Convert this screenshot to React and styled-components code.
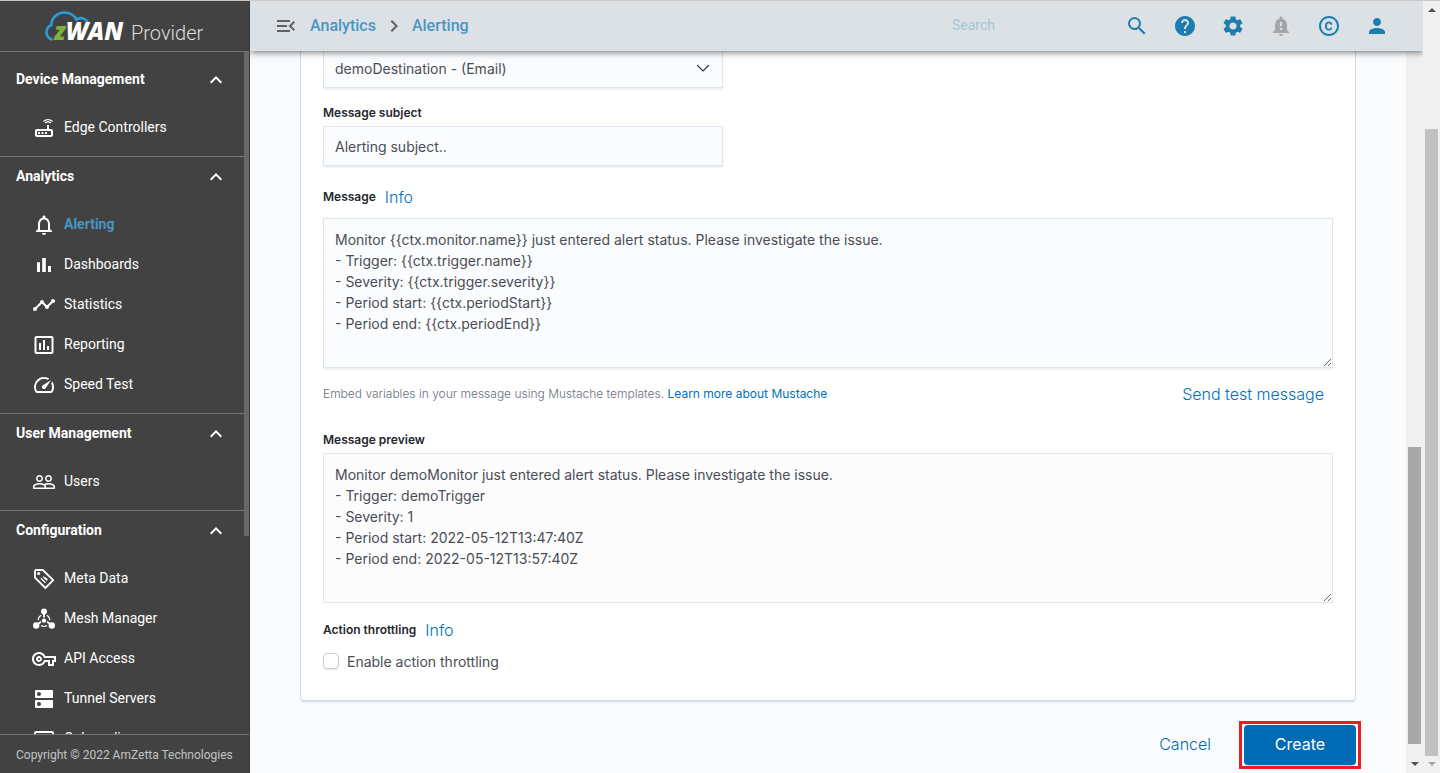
import React from "react";
import styled, { createGlobalStyle, css } from "styled-components";
import {
  MdCopyright,
  MdDns,
  MdHelp,
  MdInsertChartOutlined,
  MdKeyboardArrowRight,
  MdKeyboardArrowUp,
  MdMenuOpen,
  MdNotificationImportant,
  MdNotificationsNone,
  MdOutlineComputer,
  MdOutlineRouter,
  MdOutlineVpnKey,
  MdPeopleOutline,
  MdPerson,
  MdSearch,
  MdSettings,
  MdSpeed,
  MdTimeline,
} from "react-icons/md";

const GlobalStyle = createGlobalStyle`
  *, *::before, *::after { box-sizing: border-box; }
  body { margin: 0; background: #fafbfd; }
  button, input, select, textarea { font: inherit; }
`;

const roboto = `Roboto, "Liberation Sans", sans-serif`;
const inter = `Inter, "Liberation Sans", sans-serif`;

const Shell = styled.div`
  display: grid;
  grid-template-columns: 250px minmax(0, 1fr) 17px;
  height: 100vh;
  overflow: hidden;
  border-top: 1px solid #c8c8c8;
`;

/* ---------- Sidebar ---------- */

const Sidebar = styled.aside`
  display: flex;
  flex-direction: column;
  min-height: 0;
  background: #424242;
  border-right: 1px solid #383838;
  color: #fff;
  font-family: ${roboto};
`;

const Brand = styled.div`
  display: flex;
  flex: none;
  align-items: flex-end;
  height: 51px;
  padding: 0 0 6px 45px;
  border-bottom: 1px solid #757575;
  white-space: nowrap;
`;

const Mark = styled.div`
  position: relative;
  display: flex;
  width: 86px;
  padding-left: 9px;
  font: italic 800 24px/28px "Open Sans", "Noto Sans", sans-serif;
`;

const Cloud = styled.svg`
  position: absolute;
  left: 0;
  top: -6px;
`;

const MarkText = styled.span`
  position: relative;
  color: ${(p) => (p.$green ? "#7fb03c" : "#fff")};
`;

const Product = styled.span`
  color: #dedede;
  font-size: 20px;
  font-weight: 300;
  line-height: 24px;
`;

const NavArea = styled.div`
  display: flex;
  flex: 1;
  min-height: 0;
  overflow: hidden;
`;

const Nav = styled.nav`
  flex: 1;
  padding-top: 8px;
`;

const NavThumb = styled.div`
  width: 5px;
  height: 71%;
  background: #686868;
`;

const Section = styled.section`
  padding-bottom: 8px;
  border-bottom: 1px solid #757575;
`;

const SectionToggle = styled.button`
  display: flex;
  align-items: center;
  justify-content: space-between;
  width: 100%;
  height: 40px;
  margin-bottom: 8px;
  padding: 0 16px;
  border: 0;
  background: none;
  color: #fff;
  font-size: 14px;
  font-weight: 700;
  line-height: 20px;
`;

const NavItem = styled.a`
  display: flex;
  align-items: center;
  gap: 8px;
  height: 40px;
  padding-left: 32px;
  color: ${(p) => (p.$active ? "#4796c4" : "#fff")};
  font-size: 14px;
  font-weight: ${(p) => (p.$active ? 700 : 400)};
  line-height: 20px;
  text-decoration: none;

  svg { flex: none; color: #fff; }
`;

const Label = styled.span`
  padding-bottom: 2px;
`;

const Copyright = styled.footer`
  flex: none;
  height: 39px;
  padding-left: 16px;
  border-top: 1px solid #757575;
  color: #c4c4c4;
  font-size: 12px;
  line-height: 40px;
  white-space: nowrap;
`;

/* ---------- Top bar ---------- */

const Workspace = styled.div`
  display: flex;
  flex-direction: column;
  min-width: 0;
  min-height: 0;
`;

const TopBar = styled.header`
  position: relative;
  z-index: 1;
  display: flex;
  flex: none;
  align-items: center;
  height: 50px;
  padding: 0 22px 0 12px;
  background: #dce1e5;
  box-shadow: 0 1px 7px rgba(0, 0, 0, 0.6);
  font-family: ${roboto};
  clip-path: inset(0 0 -12px 0);
`;

const IconButton = styled.button`
  display: flex;
  align-items: center;
  justify-content: center;
  width: 48px;
  height: 48px;
  padding: 0;
  border: 0;
  background: none;
  color: ${(p) => p.$color || "#1b7db0"};
`;

const Crumbs = styled.nav`
  display: flex;
  flex: 1;
  align-items: center;
  gap: 6px;
  color: #616161;
`;

const Crumb = styled.a`
  color: #4796c4;
  font-size: 16px;
  font-weight: 500;
  line-height: 24px;
  text-decoration: none;
`;

const SearchBox = styled.input`
  width: 161px;
  padding: 0 0 2px;
  border: 0;
  outline: 0;
  background: none;
  color: #1b7db0;
  font-size: 14px;
  line-height: 20px;

  &::placeholder { color: #a3c5d7; opacity: 1; }
`;

/* ---------- Page body ---------- */

const Body = styled.div`
  display: flex;
  flex: 1;
  min-height: 0;
`;

const Scroller = styled.main`
  display: flex;
  flex: 1;
  flex-direction: column;
  justify-content: flex-end;
  min-width: 0;
  overflow: hidden;
  padding: 0 45px 4px 50px;
  background: #fafbfd;
  color: #343741;
  font-family: ${inter};
`;

const Panel = styled.form`
  display: flex;
  flex: none;
  flex-direction: column;
  margin-right: 5px;
  padding: 22px 22px 28px;
  border: 1px solid #d3dae6;
  border-radius: 4px;
  background: #fff;
  box-shadow: 0 2px 2px -1px rgba(152, 162, 179, 0.4);
`;

const Row = styled.div`
  display: flex;
  align-items: center;
  justify-content: ${(p) => (p.$spread ? "space-between" : "flex-start")};
  gap: 9px;
  height: ${(p) => p.$height}px;
  padding-top: ${(p) => p.$drop || 0}px;
`;

const FieldLabel = styled.label`
  color: #25272e;
  font-size: 12px;
  font-weight: 600;
  line-height: 18px;
`;

const TextLink = styled.a`
  padding-right: ${(p) => (p.$inset ? 9 : 0)}px;
  color: #0071b8;
  font-size: ${(p) => (p.$small ? 12 : 16)}px;
  font-weight: ${(p) => (p.$small ? 400 : 300)};
  line-height: 24px;
  text-decoration: none;
`;

const control = css`
  display: block;
  width: 100%;
  border: 1px solid #e0e4ee;
  border-radius: 0;
  outline: 0;
  background: #fbfcfd;
  box-shadow: 0 2px 2px -1px rgba(152, 162, 179, 0.3);
  color: #4a4d56;
  font-size: 14px;
  font-weight: 400;
`;

const SelectWrap = styled.div`
  position: relative;
  max-width: 400px;

  svg { position: absolute; right: 12px; top: 12px; pointer-events: none; }
`;

const Select = styled.select`
  ${control}
  height: 40px;
  padding: 0 40px 0 11px;
  appearance: none;
`;

const TextInput = styled.input`
  ${control}
  max-width: 400px;
  height: 40px;
  padding: 0 11px;
`;

const TextArea = styled.textarea`
  ${control}
  height: 150px;
  padding: 10px 11px;
  line-height: 21px;
  resize: vertical;

  &:read-only { background: #fcfcfc; box-shadow: none; }
`;

const Help = styled.p`
  margin: 0;
  color: #69707d;
  font-size: 12px;
  font-weight: 300;
  line-height: 18px;
`;

const CheckRow = styled.label`
  display: flex;
  align-items: center;
  gap: 8px;
  height: 22px;
  color: #4a4d56;
  font-size: 14px;
  font-weight: 400;
`;

const Checkbox = styled.input`
  width: 16px;
  height: 16px;
  margin: 0;
  border: 1px solid #c9cbcd;
  border-radius: 4px;
  appearance: none;
  background: #fff;
  box-shadow: 0 2px 2px -1px rgba(152, 162, 179, 0.3);
`;

const Actions = styled.div`
  display: flex;
  flex: none;
  align-items: center;
  justify-content: flex-end;
  gap: 28px;
  padding-top: 20px;
`;

const CancelButton = styled.button`
  padding: 0 0 2px;
  border: 0;
  background: none;
  color: #0069b4;
  font-size: 16px;
  font-weight: 300;
  line-height: 24px;
`;

const Highlight = styled.div`
  padding: 1px 2px;
  border: 3px solid #ed1c24;
  background: #fff;
`;

const CreateButton = styled.button`
  display: block;
  width: 112px;
  height: 40px;
  padding: 0 0 2px;
  border: 0;
  border-radius: 4px;
  background: #006bb4;
  box-shadow: 0 1px 1px rgba(54, 97, 126, 0.3);
  color: #fff;
  font-size: 16px;
  font-weight: 400;
`;

/* ---------- Scrollbars ---------- */

const Track = styled.div`
  display: flex;
  flex: none;
  flex-direction: column;
  align-items: center;
  width: 17px;
  background: #f0f0f0;
`;

const Space = styled.div`
  flex: ${(p) => p.$share} 1 0;
`;

const Thumb = styled.div`
  flex: ${(p) => p.$share} 1 0;
  width: 13px;
  background: ${(p) => p.$color};
`;

const Arrow = styled.svg`
  flex: none;
  width: 17px;
  height: 17px;
  fill: ${(p) => p.$color};
`;

function BarsIcon() {
  return (
    <svg width="24" height="24" viewBox="0 0 24 24" fill="currentColor">
      <path d="M5 9.200h3V19H5zM10.200 5h3.600v14h-3.600zM16 13h3v6h-3z" />
    </svg>
  );
}

function TagIcon() {
  return (
    <svg width="24" height="24" viewBox="0 0 24 24" fill="none" stroke="currentColor" strokeWidth="1.8">
      <path d="M3 4.2V10.6L13.4 21 21.2 13.2 10.8 3H4.2C3.5 3 3 3.5 3 4.2Z" strokeLinejoin="round" />
      <path d="M8.9 11.3l4.6 4.6M11.1 9.6l4 4M13 10.400l2.400 2.400" strokeWidth="1.3" />
      <circle cx="6.6" cy="6.6" r="1.5" fill="currentColor" stroke="none" />
    </svg>
  );
}

function MeshIcon() {
  return (
    <svg width="24" height="24" viewBox="0 0 24 24" fill="currentColor">
      <g stroke="currentColor" fill="none">
        <path d="M12 5v8M12 13l-8 5M12 13l8 5" strokeWidth="1.8" />
        <path d="M9.2 8.2a6 6 0 0 0-3.1 5M14.8 8.2a6 6 0 0 1 3.1 5M9 18.6a6 6 0 0 0 6 0" strokeWidth="1.1" />
      </g>
      <circle cx="12" cy="4.500" r="3" />
      <circle cx="4.2" cy="18.500" r="3.200" />
      <circle cx="19.8" cy="18.500" r="3.200" />
      <circle cx="12" cy="13.6" r="3.2" fill="#424242" />
      <circle cx="12" cy="13.6" r="2.2" />
    </svg>
  );
}

const SECTIONS = [
  { title: "Device Management", items: [["Edge Controllers", MdOutlineRouter]] },
  {
    title: "Analytics",
    items: [
      ["Alerting", MdNotificationsNone],
      ["Dashboards", BarsIcon],
      ["Statistics", MdTimeline],
      ["Reporting", MdInsertChartOutlined],
      ["Speed Test", MdSpeed],
    ],
  },
  { title: "User Management", items: [["Users", MdPeopleOutline]] },
  {
    title: "Configuration",
    items: [
      ["Meta Data", TagIcon],
      ["Mesh Manager", MeshIcon],
      ["API Access", MdOutlineVpnKey],
      ["Tunnel Servers", MdDns],
      ["Onboarding", MdOutlineComputer],
    ],
  },
];

const TEMPLATE = `Monitor {{ctx.monitor.name}} just entered alert status. Please investigate the issue.
- Trigger: {{ctx.trigger.name}}
- Severity: {{ctx.trigger.severity}}
- Period start: {{ctx.periodStart}}
- Period end: {{ctx.periodEnd}}`;

const PREVIEW = `Monitor demoMonitor just entered alert status. Please investigate the issue.
- Trigger: demoTrigger
- Severity: 1
- Period start: 2022-05-12T13:47:40Z
- Period end: 2022-05-12T13:57:40Z`;

export default function App() {
  return (
    <>
      <GlobalStyle />
      <Shell>
        <Sidebar>
          <Brand>
            <Mark>
              <Cloud width="48" height="32" viewBox="0 0 48 32" fill="none" stroke="#2b9bd8" strokeWidth="2.6" strokeLinecap="round">
                <path d="M6.500 28.500C-.5 25.500 .2 16.500 6.200 14.200C6.500 6 13 1.500 19.500 1.500C25 1.500 29 4 31.500 8.500C36.500 5.800 41 7.500 43 11.500" />
              </Cloud>
              <MarkText $green>z</MarkText>
              <MarkText>WAN</MarkText>
            </Mark>
            <Product>Provider</Product>
          </Brand>
          <NavArea>
            <Nav aria-label="Main">
              {SECTIONS.map((section) => (
                <Section key={section.title}>
                  <SectionToggle type="button" aria-expanded="true">
                    <Label>{section.title}</Label>
                    <MdKeyboardArrowUp size={24} />
                  </SectionToggle>
                  {section.items.map(([name, Icon]) => (
                    <NavItem key={name} href="#" $active={name === "Alerting"}>
                      <Icon size={24} />
                      <Label>{name}</Label>
                    </NavItem>
                  ))}
                </Section>
              ))}
            </Nav>
            <NavThumb />
          </NavArea>
          <Copyright>Copyright © 2022 AmZetta Technologies</Copyright>
        </Sidebar>

        <Workspace>
          <TopBar>
            <IconButton type="button" aria-label="Collapse menu" $color="#616161">
              <MdMenuOpen size={24} />
            </IconButton>
            <Crumbs aria-label="Breadcrumb">
              <Crumb href="#">Analytics</Crumb>
              <MdKeyboardArrowRight size={24} />
              <Crumb href="#">Alerting</Crumb>
            </Crumbs>
            <SearchBox type="text" placeholder="Search" aria-label="Search" />
            <IconButton type="button" aria-label="Search"><MdSearch size={24} /></IconButton>
            <IconButton type="button" aria-label="Help"><MdHelp size={24} /></IconButton>
            <IconButton type="button" aria-label="Settings"><MdSettings size={24} /></IconButton>
            <IconButton type="button" aria-label="Notifications" $color="#a3a7aa">
              <MdNotificationImportant size={24} />
            </IconButton>
            <IconButton type="button" aria-label="Copyright"><MdCopyright size={24} /></IconButton>
            <IconButton type="button" aria-label="Account"><MdPerson size={24} /></IconButton>
          </TopBar>

          <Body>
            <Scroller>
              <Panel>
                <SelectWrap>
                  <Select aria-label="Destination" defaultValue="demo">
                    <option value="demo">demoDestination - (Email)</option>
                  </Select>
                  <svg width="16" height="16" viewBox="0 0 16 16" fill="none" stroke="#343741" strokeWidth="1.2" strokeLinecap="round">
                    <path d="M2.500 5.500L8 11l5.500-5.500" />
                  </svg>
                </SelectWrap>
                <Row $height={38} $drop={12}>
                  <FieldLabel htmlFor="subject">Message subject</FieldLabel>
                </Row>
                <TextInput id="subject" type="text" defaultValue="Alerting subject.." />
                <Row $height={52} $drop={10}>
                  <FieldLabel htmlFor="message">Message</FieldLabel>
                  <TextLink href="#">Info</TextLink>
                </Row>
                <TextArea id="message" defaultValue={TEMPLATE} />
                <Row $height={52} $spread>
                  <Help>
                    Embed variables in your message using Mustache templates.{" "}
                    <TextLink href="#" $small>Learn more about Mustache</TextLink>
                  </Help>
                  <TextLink href="#" $inset>Send test message</TextLink>
                </Row>
                <Row $height={33} $drop={6}>
                  <FieldLabel htmlFor="preview">Message preview</FieldLabel>
                </Row>
                <TextArea id="preview" readOnly defaultValue={PREVIEW} />
                <Row $height={47} $drop={6}>
                  <FieldLabel as="span">Action throttling</FieldLabel>
                  <TextLink href="#">Info</TextLink>
                </Row>
                <CheckRow>
                  <Checkbox type="checkbox" />
                  Enable action throttling
                </CheckRow>
              </Panel>
              <Actions>
                <CancelButton type="button">Cancel</CancelButton>
                <Highlight>
                  <CreateButton type="button">Create</CreateButton>
                </Highlight>
              </Actions>
            </Scroller>
            <Track aria-hidden="true">
              <Space $share={395} />
              <Thumb $share={297} $color="#a8a8a8" />
              <Space $share={12} />
              <Arrow viewBox="0 0 17 17" $color="#505050"><path d="M5 6h8l-4 4z" /></Arrow>
            </Track>
          </Body>
        </Workspace>

        <Track aria-hidden="true">
          <Arrow viewBox="0 0 17 17" $color="#505050"><path d="M5 11h8L9 7z" /></Arrow>
          <Space $share={111} />
          <Thumb $share={627} $color="#c1c1c1" />
          <Arrow viewBox="0 0 17 17" $color="#a3a3a3"><path d="M5 6h8l-4 4z" /></Arrow>
        </Track>
      </Shell>
    </>
  );
}
